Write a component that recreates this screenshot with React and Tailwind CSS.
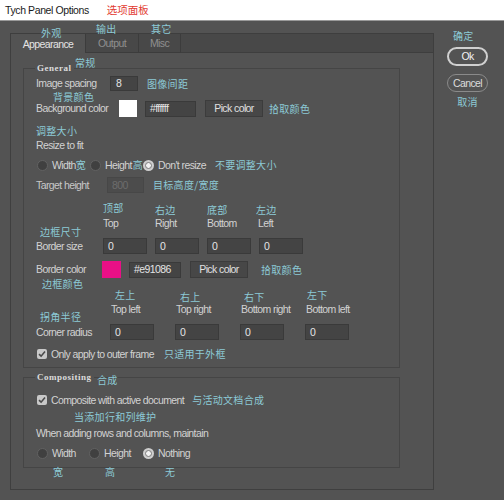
import React from "react";

const ZH = "font-['Noto_Sans_CJK_SC',sans-serif] text-[10px] leading-[12px] tracking-[0.3px] text-[#8ccad6] whitespace-nowrap";
const ZHA = "absolute font-['Noto_Sans_CJK_SC',sans-serif] text-[10px] leading-[12px] tracking-[0.3px] text-[#8ccad6] whitespace-nowrap";

function Field({ w, value, disabled }) {
  return (
    <div
      className={
        disabled
          ? "h-[16px] shrink-0 bg-[#4c4c4c] border border-[#474747] text-[#6c6c6c] pl-[4px] flex items-center"
          : "h-[16px] shrink-0 bg-[#444444] border border-[#3a3a3a] text-[#e4e4e4] pl-[4px] flex items-center"
      }
      style={{ width: w }}
    >
      {value}
    </div>
  );
}

function PickBtn() {
  return (
    <div className="h-[17px] w-[58px] shrink-0 bg-[#474747] border border-[#3c3c3c] text-[#e0e0e0] flex items-center justify-center">
      Pick color
    </div>
  );
}

function Radio({ on }) {
  return on ? (
    <div className="w-[11px] h-[11px] shrink-0 rounded-full bg-[#cfcfcf] flex items-center justify-center">
      <div className="w-[7px] h-[7px] rounded-full border border-[#7a7a7a] bg-[#f2f2f2]" />
    </div>
  ) : (
    <div className="w-[11px] h-[11px] shrink-0 rounded-full bg-[#404040] border border-[#626262]" />
  );
}

function Check() {
  return (
    <div className="w-[10px] h-[10px] shrink-0 rounded-[2px] bg-[#c8c8c8] flex items-center justify-center">
      <svg width="8" height="8" viewBox="0 0 8 8">
        <polyline points="1,4.2 3.1,6.2 7,1.6" fill="none" stroke="#4a4a4a" strokeWidth="1.6" />
      </svg>
    </div>
  );
}

export default function App() {
  return (
    <div className="w-[504px] h-[500px] bg-[#535353] overflow-hidden font-['Liberation_Sans','Noto_Sans_CJK_SC',sans-serif] text-[10.5px] tracking-[-0.6px] text-[#d2d2d2] leading-none">
      {/* title bar */}
      <div className="h-[21px] bg-white border-b border-[#9a9a9a] flex items-center pl-[5px]">
        <span className="text-[10.5px] tracking-[-0.4px] text-[#1a1a1a]">Tych Panel Options</span>
        <span className="ml-[18px] text-[10.5px] tracking-normal text-[#e23a2f] font-['Noto_Sans_CJK_SC',sans-serif]">选项面板</span>
      </div>

      <div className="flex">
        {/* left: tabs + panel */}
        <div className="ml-[10px] w-[424px]">
          <div className="mt-[12px] h-[20px] flex bg-[#484848] border-t border-r border-[#3e3e3e]">
            <div className="relative w-[75px] bg-[#535353] border-l border-[#3e3e3e] flex items-center justify-center pt-[1px] text-[#e4e4e4]">
              Appearance
              <span className={ZHA + " left-[30px] top-[-7px]"}>外观</span>
            </div>
            <div className="relative w-[53px] border-l border-b border-[#3c3c3c] flex items-center justify-center text-[#8f8f8f]">
              Output
              <span className={ZHA + " left-[10px] top-[-11px]"}>输出</span>
            </div>
            <div className="relative w-[43px] border-l border-r border-b border-[#3c3c3c] flex items-center justify-center text-[#8f8f8f]">
              Misc
              <span className={ZHA + " left-[12px] top-[-11px]"}>其它</span>
            </div>
            <div className="flex-1 border-b border-[#3e3e3e]" />
          </div>

          <div className="h-[437px] border-l border-r border-b border-[#3f3f3f] pt-[15px] pl-[12px]">
            {/* General group */}
            <div className="relative w-[377px] h-[300px] border border-[#454545] pl-[12px] pt-[7px]">
              <span className="absolute left-[11px] top-[-7px] px-[2px] bg-[#535353] font-['Liberation_Serif',serif] font-bold text-[9px] leading-[12px] tracking-[0.5px] text-[#dcdcdc]">
                General
              </span>
              <span className={ZHA + " left-[51px] top-[-12px]"}>常规</span>

              {/* Image spacing */}
              <div className="h-[15px] flex items-center">
                <span className="w-[74px] shrink-0">Image spacing</span>
                <div className="h-[15px] w-[28px] bg-[#444444] border border-[#3a3a3a] text-[#e4e4e4] pl-[5px] flex items-center">8</div>
                <span className={ZH + " ml-[9px]"}>图像间距</span>
              </div>

              {/* Background color */}
              <div className="relative mt-[9px] h-[17px] flex items-center">
                <span className={ZHA + " left-[17px] top-[-9px]"}>背景颜色</span>
                <span className="w-[83px] shrink-0">Background color</span>
                <div className="w-[18px] h-[17px] bg-white shrink-0" />
                <div className="ml-[8px]"><Field w={51} value="#ffffff" /></div>
                <div className="ml-[9px]"><PickBtn /></div>
                <span className={ZH + " ml-[6px]"}>拾取颜色</span>
              </div>

              {/* Resize to fit */}
              <div className="relative mt-[21px] h-[14px] flex items-center">
                <span className={ZHA + " left-0 top-[-13px]"}>调整大小</span>
                Resize to fit
              </div>

              {/* radios */}
              <div className="mt-[6px] h-[14px] flex items-center pl-[1px]">
                <div className="w-[53px] flex items-center">
                  <Radio />
                  <span className="ml-[4px]">Width</span>
                  <span className={ZH}>宽</span>
                </div>
                <div className="w-[53px] flex items-center">
                  <Radio />
                  <span className="ml-[4px]">Height</span>
                  <span className={ZH + " ml-[1px]"}>高</span>
                </div>
                <div className="flex items-center">
                  <Radio on />
                  <span className="ml-[4px]">Don't resize</span>
                  <span className={ZH + " ml-[9px]"}>不要调整大小</span>
                </div>
              </div>

              {/* Target height */}
              <div className="mt-[5px] h-[16px] flex items-center">
                <span className="w-[71px] shrink-0 text-[#c8c8c8]">Target height</span>
                <Field w={37} value="800" disabled />
                <span className={ZH + " ml-[9px]"}>目标高度/宽度</span>
              </div>

              {/* Top Right Bottom Left */}
              <div className="mt-[23px] h-[14px] flex items-center pl-[67px]">
                <div className="relative w-[52px]">
                  Top<span className={ZHA + " left-0 top-[-16px]"}>顶部</span>
                </div>
                <div className="relative w-[52px]">
                  Right<span className={ZHA + " left-0 top-[-14px]"}>右边</span>
                </div>
                <div className="relative w-[51px]">
                  Bottom<span className={ZHA + " left-0 top-[-14px]"}>底部</span>
                </div>
                <div className="relative">
                  Left<span className={ZHA + " left-[-2px] top-[-14px]"}>左边</span>
                </div>
              </div>

              {/* Border size */}
              <div className="relative mt-[8px] h-[16px] flex items-center">
                <span className={ZHA + " left-[4px] top-[-12px]"}>边框尺寸</span>
                <span className="w-[67px] shrink-0">Border size</span>
                <div className="flex gap-[8px]">
                  <Field w={44} value="0" />
                  <Field w={44} value="0" />
                  <Field w={44} value="0" />
                  <Field w={44} value="0" />
                </div>
              </div>

              {/* Border color */}
              <div className="relative mt-[7px] h-[17px] flex items-center">
                <span className={ZHA + " left-[6px] top-[17px]"}>边框颜色</span>
                <span className="w-[66px] shrink-0">Border color</span>
                <div className="w-[19px] h-[17px] bg-[#e91086] shrink-0" />
                <div className="ml-[8px]"><Field w={52} value="#e91086" /></div>
                <div className="ml-[9px]"><PickBtn /></div>
                <span className={ZH + " ml-[13px]"}>拾取颜色</span>
              </div>

              {/* corner labels */}
              <div className="mt-[24px] h-[14px] flex items-center pl-[75px]">
                <div className="relative w-[65px]">
                  Top left<span className={ZHA + " left-[4px] top-[-15px]"}>左上</span>
                </div>
                <div className="relative w-[65px]">
                  Top right<span className={ZHA + " left-[4px] top-[-13px]"}>右上</span>
                </div>
                <div className="relative w-[65px]">
                  Bottom right<span className={ZHA + " left-[3px] top-[-13px]"}>右下</span>
                </div>
                <div className="relative">
                  Bottom left<span className={ZHA + " left-[1px] top-[-15px]"}>左下</span>
                </div>
              </div>

              {/* Corner radius */}
              <div className="relative mt-[8px] h-[16px] flex items-center">
                <span className={ZHA + " left-[4px] top-[-13px]"}>拐角半径</span>
                <span className="w-[74px] shrink-0">Corner radius</span>
                <div className="flex gap-[21px]">
                  <Field w={44} value="0" />
                  <Field w={44} value="0" />
                  <Field w={44} value="0" />
                  <Field w={44} value="0" />
                </div>
              </div>

              {/* only apply */}
              <div className="mt-[7px] h-[14px] flex items-center pl-[1px]">
                <Check />
                <span className="ml-[4px]">Only apply to outer frame</span>
                <span className={ZH + " ml-[10px]"}>只适用于外框</span>
              </div>
            </div>

            {/* Compositing group */}
            <div className="relative mt-[9px] w-[377px] h-[91px] border border-[#454545] pl-[12px] pt-[15px]">
              <span className="absolute left-[11px] top-[-7px] px-[2px] bg-[#535353] font-['Liberation_Serif',serif] font-bold text-[9px] leading-[12px] tracking-[0.5px] text-[#dcdcdc]">
                Compositing
              </span>
              <span className={ZHA + " left-[73px] top-[-4px]"}>合成</span>

              <div className="h-[14px] flex items-center pl-[1px]">
                <Check />
                <span className="ml-[4px]">Composite with active document</span>
                <span className={ZH + " ml-[8px]"}>与活动文档合成</span>
              </div>

              <div className="relative mt-[19px] h-[14px] flex items-center">
                <span className={ZHA + " left-[38px] top-[-15px]"}>当添加行和列维护</span>
                When adding rows and columns, maintain
              </div>

              <div className="mt-[6px] h-[14px] flex items-center pl-[1px]">
                <div className="relative w-[52px] flex items-center">
                  <Radio />
                  <span className="ml-[4px]">Width</span>
                  <span className={ZHA + " left-[16px] top-[18px]"}>宽</span>
                </div>
                <div className="relative w-[54px] flex items-center">
                  <Radio />
                  <span className="ml-[4px]">Height</span>
                  <span className={ZHA + " left-[16px] top-[18px]"}>高</span>
                </div>
                <div className="relative flex items-center">
                  <Radio on />
                  <span className="ml-[4px]">Nothing</span>
                  <span className={ZHA + " left-[22px] top-[18px]"}>无</span>
                </div>
              </div>
            </div>
          </div>
        </div>

        {/* right: buttons */}
        <div className="ml-[13px] w-[41px] flex flex-col">
          <span className={ZH + " mt-[9px] pl-[6px]"}>确定</span>
          <div className="mt-[5px] h-[19px] rounded-full border-2 border-[#d0d0d0] flex items-center justify-center text-[#f2f2f2]">
            Ok
          </div>
          <div className="mt-[8px] h-[18px] rounded-full border border-[#8a8a8a] flex items-center justify-center text-[#dcdcdc]">
            Cancel
          </div>
          <span className={ZH + " mt-[4px] text-center"}>取消</span>
        </div>
      </div>
    </div>
  );
}
